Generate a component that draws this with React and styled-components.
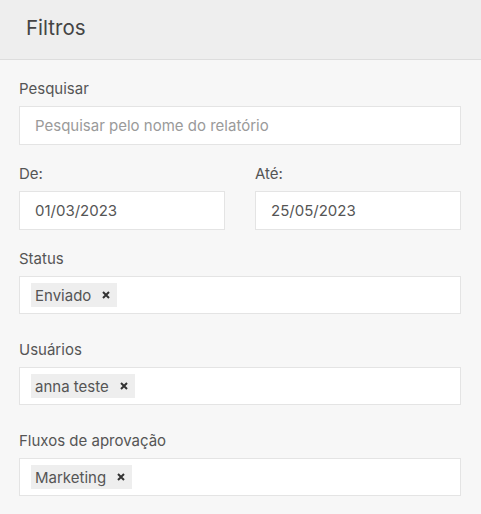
import React from "react";
import styled, { createGlobalStyle } from "styled-components";

const Global = createGlobalStyle`
  html, body { margin: 0; padding: 0; background: #f7f7f7; }
  body { font-family: Inter, "Noto Sans", sans-serif; color: #555; }
  #root { min-height: 100vh; }
  * { box-sizing: border-box; }
`;

const Panel = styled.div`
  width: 481px;
  min-height: 514px;
  background: #f7f7f7;
`;

const Header = styled.div`
  height: 60px;
  padding: 14px 0 0 26px;
  background: #eeeeee;
  border-bottom: 1px solid #dddddd;
`;

const Title = styled.h2`
  margin: 0;
  font-size: 20.5px;
  line-height: 27px;
  font-weight: 400;
  color: #444;
`;

const Body = styled.div`
  padding: 19px 20px 0 19px;
`;

const Field = styled.div`
  margin-bottom: ${(p) => (p.$spaced ? "26px" : "19px")};
  flex: 1;
`;

const Row = styled.div`
  display: flex;
  gap: 30px;
`;

const Label = styled.label`
  display: block;
  font-size: 15px;
  line-height: 20px;
  margin-bottom: 7px;
  color: #555;
`;

const Input = styled.input`
  display: block;
  width: 100%;
  height: 39px;
  padding: 0 15px;
  border: 1px solid #e4e4e4;
  background: #fff;
  font-family: inherit;
  font-size: 15px;
  color: #555;
  outline: none;
  &::placeholder { color: #9a9a9a; }
`;

const TagBox = styled.div`
  display: flex;
  align-items: center;
  gap: 6px;
  height: 38px;
  padding: 0 11px;
  border: 1px solid #e4e4e4;
  background: #fff;
`;

const Tag = styled.span`
  display: inline-flex;
  align-items: center;
  height: 24px;
  padding: 0 7px 0 4px;
  background: #eeeeee;
  font-size: 15px;
  color: #555;
  gap: 11px;
`;

const Remove = styled.svg`
  width: 8px;
  height: 8px;
  display: block;
`;

const X = () => (
  <Remove viewBox="0 0 8 8">
    <path d="M1 1 L7 7 M7 1 L1 7" stroke="#333" strokeWidth="2" strokeLinecap="butt" />
  </Remove>
);

const TagField = ({ label, tag }) => (
  <Field $spaced>
    <Label>{label}</Label>
    <TagBox>
      <Tag>
        {tag}
        <X />
      </Tag>
    </TagBox>
  </Field>
);

export default function App() {
  return (
    <Panel>
      <Global />
      <Header>
        <Title>Filtros</Title>
      </Header>
      <Body>
        <Field>
          <Label>Pesquisar</Label>
          <Input placeholder="Pesquisar pelo nome do relatório" />
        </Field>
        <Row>
          <Field>
            <Label>De:</Label>
            <Input defaultValue="01/03/2023" />
          </Field>
          <Field>
            <Label>Até:</Label>
            <Input defaultValue="25/05/2023" />
          </Field>
        </Row>
        <TagField label="Status" tag="Enviado" />
        <TagField label="Usuários" tag="anna teste" />
        <TagField label="Fluxos de aprovação" tag="Marketing" />
      </Body>
    </Panel>
  );
}
